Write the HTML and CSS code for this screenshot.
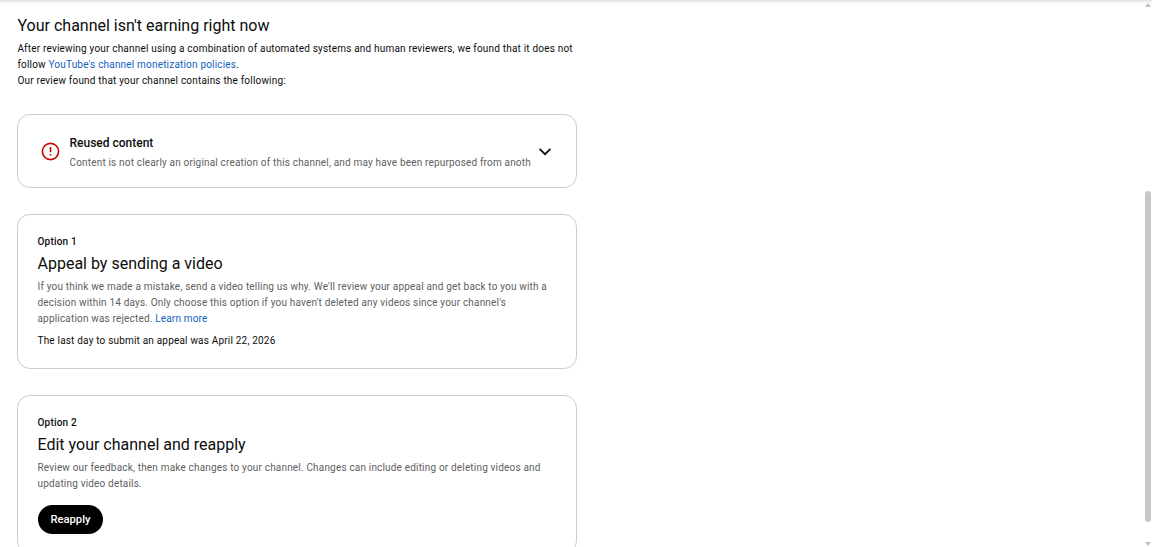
FILE: index.html
```html
<!DOCTYPE html>
<html lang="en">
<head>
  <meta charset="UTF-8" />
  <title>Channel monetization</title>
  <link rel="stylesheet" href="styles.css">
</head>
<body>

<div class="page">
  <main class="content">
    <h1 class="title">Your channel isn't earning right now</h1>
    <p class="intro">After reviewing your channel using a combination of automated systems and human reviewers, we found that it does not<br>follow <a href="#">YouTube's channel monetization policies</a>.</p>
    <p class="intro">Our review found that your channel contains the following:</p>

    <!-- Policy issue -->
    <section class="card issue">
      <svg class="issue-icon" viewBox="0 0 20 20">
        <circle cx="9.5" cy="9.5" r="8.1" />
        <path d="M9.5 5v5.3M9.5 12v1.6" />
      </svg>
      <div class="issue-text">
        <h3>Reused content</h3>
        <p>Content is not clearly an original creation of this channel, and may have been repurposed from anoth</p>
      </div>
      <svg class="chevron" viewBox="0 0 14 10">
        <path d="M1.6 1.8L7 7.2l5.4-5.4" />
      </svg>
    </section>

    <!-- Appeal -->
    <section class="card option option-appeal">
      <h4>Option 1</h4>
      <h2>Appeal by sending a video</h2>
      <p class="desc">If you think we made a mistake, send a video telling us why. We'll review your appeal and get back to you with a<br>decision within 14 days. Only choose this option if you haven't deleted any videos since your channel's<br>application was rejected. <a href="#">Learn more</a></p>
      <p class="deadline">The last day to submit an appeal was April 22, 2026</p>
    </section>

    <!-- Reapply -->
    <section class="card option option-reapply">
      <h4>Option 2</h4>
      <h2>Edit your channel and reapply</h2>
      <p class="desc">Review our feedback, then make changes to your channel. Changes can include editing or deleting videos and<br>updating video details.</p>
      <button class="reapply-btn">Reapply</button>
    </section>
  </main>

  <div class="scrollbar">
    <div class="arrow-up"></div>
    <div class="thumb"></div>
    <div class="arrow-down"></div>
  </div>
</div>

</body>
</html>
```
FILE: styles.css
```css
* {
  box-sizing: border-box;
}

body {
  margin: 0;
  background: #fff;
  color: #0d0d0d;
  font-family: Roboto, "Liberation Sans", sans-serif;
  font-size: 10px;
  line-height: 16px;
  letter-spacing: 0.19px;
  overflow: hidden;
}

h1, h2, h3, h4, p {
  margin: 0;
}

a {
  color: #0f62c0;
  text-decoration: none;
}

.page {
  display: flex;
  justify-content: space-between;
  height: 547px;
  overflow: hidden;
  background: linear-gradient(#dedede, #f4f4f4 2px, #fff 5px);
}

.content {
  width: 577px;
  padding: 15px 0 0 17px;
}

.title,
.option h2 {
  font-size: 16px;
  line-height: 22px;
  font-weight: 400;
  letter-spacing: 0;
}

.title {
  margin-bottom: 4px;
  padding-left: 0.5px;
}

.intro {
  padding-left: 0.4px;
  white-space: nowrap;
}

.card {
  border: 1px solid #ccc;
  border-radius: 12.8px;
}

.issue {
  display: flex;
  align-items: center;
  height: 74px;
  margin: 25px 0 26px;
  padding: 2px 24px 0 23px;
}

.issue-icon {
  width: 20px;
  height: 20px;
  margin-right: 8.5px;
  flex-shrink: 0;
  fill: none;
  stroke: #c00;
  stroke-width: 1.6;
}

.issue-text {
  width: 461.5px;
  padding-top: 1px;
  overflow: hidden;
  white-space: nowrap;
}

.issue-text h3 {
  font-size: 12px;
  line-height: 20px;
  font-weight: 500;
  letter-spacing: 0;
}

.issue-text p {
  line-height: 20px;
  letter-spacing: 0.175px;
  color: #606060;
}

.chevron {
  width: 14px;
  height: 10px;
  margin-left: 6.5px;
  flex-shrink: 0;
  fill: none;
  stroke: #0d0d0d;
  stroke-width: 1.7;
}

.option {
  padding: 19px 19.5px 0;
  white-space: nowrap;
}

.option-appeal {
  height: 155px;
  margin-bottom: 26px;
}

.option-reapply {
  height: 159px;
}

.option h4 {
  font-size: 10px;
  font-weight: 500;
  margin-bottom: 3px;
}

.option h2 {
  margin-bottom: 4px;
}

.desc {
  letter-spacing: 0.178px;
  color: #606060;
}

.deadline {
  margin-top: 6px;
}

.reapply-btn {
  display: block;
  width: 65px;
  height: 29px;
  margin: 13px 0 0 0.5px;
  padding: 0;
  border: none;
  border-radius: 15px;
  background: #000;
  color: #fff;
  font-family: inherit;
  font-size: 11.2px;
  font-weight: 500;
}

.scrollbar {
  display: flex;
  flex-direction: column;
  align-items: center;
  width: 8px;
  padding: 3px 1px 1px 0;
}

.arrow-up,
.arrow-down {
  border-left: 3px solid transparent;
  border-right: 3px solid transparent;
}

.arrow-up {
  border-bottom: 4px solid #c1c1c1;
}

.arrow-down {
  margin-top: auto;
  border-top: 4px solid #c1c1c1;
}

.thumb {
  width: 6px;
  height: 331px;
  margin-top: 184px;
  border-radius: 3px;
  background: #c8c8c8;
}
```
